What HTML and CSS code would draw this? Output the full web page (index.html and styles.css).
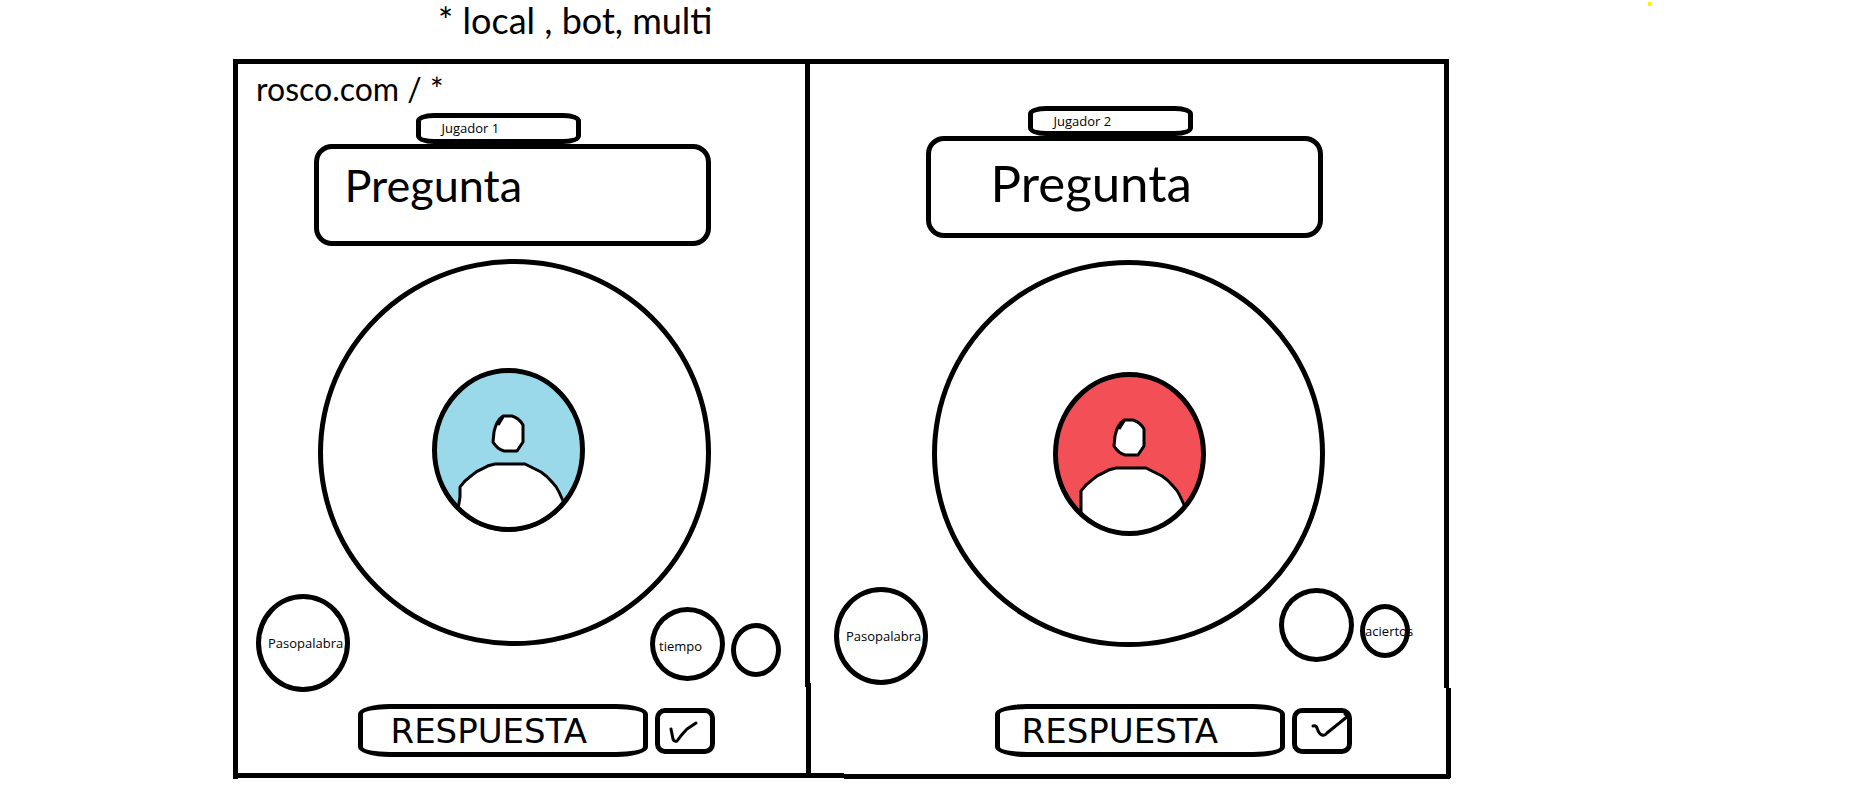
FILE: index.html
```html
<!DOCTYPE html>
<html lang="es">
<head>
<meta charset="utf-8">
<meta name="viewport" content="width=device-width, initial-scale=1">
<title>Rosco</title>
<link rel="stylesheet" href="styles.css">
</head>
<body>
<header class="notes">
  <p class="modes">* local , bot, multi</p>
  <span class="speck"></span>
</header>
<main class="board">
  <svg class="frame" viewBox="0 0 1218 720" preserveAspectRatio="none" aria-hidden="true">
    <path d="M0 2.5H1216M2.5 0V720M574.5 0V628M575.5 624V716M1213.5 0V629M1215.5 629V719M0 716.5H611M611 717.5H1217"/>
  </svg>

  <section class="panel panel-one">
    <p class="address">rosco.com / *</p>
    <div class="tag">Jugador 1</div>
    <h2 class="question">Pregunta</h2>
    <div class="stage">
      <div class="wheel">
        <svg class="avatar" viewBox="0 0 153 164" role="img" aria-label="Jugador 1">
          <ellipse class="avatar-back" cx="76.5" cy="82" rx="74" ry="79.5"/>
          <path class="avatar-body" d="M26 141L28 129L28 119Q33 112 39 108Q44 103 50 101Q56 97 63 96H93Q101 100 109 104Q115 108 120 114Q125 119 127 124L132 135A74 79.5 0 0 1 26 141Z"/>
          <path class="avatar-body" d="M71 48H80Q87 50 91 57V74L85 83H72Q65 81 61 74L62 64Q64 53 71 48ZM71 49L66 57"/>
          <ellipse class="avatar-ring" cx="76.5" cy="82" rx="74" ry="79.5"/>
        </svg>
      </div>
      <button class="disc pass" type="button">Pasopalabra</button>
      <div class="counters">
        <div class="disc time">tiempo</div>
        <div class="disc hits"></div>
      </div>
    </div>
    <form class="reply">
      <input class="answer" type="text" placeholder="RESPUESTA" aria-label="Respuesta del jugador 1">
      <button class="send" type="button" aria-label="Enviar">
        <svg class="tick" viewBox="5 5 50 36" aria-hidden="true"><path d="M16 21L18 31Q19 34 22 33Q27 26 32 21L41 15"/></svg>
      </button>
    </form>
  </section>

  <section class="panel panel-two">
    <div class="tag">Jugador 2</div>
    <h2 class="question">Pregunta</h2>
    <div class="stage">
      <div class="wheel">
        <svg class="avatar" viewBox="0 0 153 164" role="img" aria-label="Jugador 2">
          <ellipse class="avatar-back" cx="76.5" cy="82" rx="74" ry="79.5"/>
          <path class="avatar-body" d="M28 141V119Q33 112 39 108Q44 103 50 101Q56 97 63 96H93Q101 100 109 104Q115 108 120 114Q125 119 127 124L132 135A74 79.5 0 0 1 28 141Z"/>
          <path class="avatar-body" d="M71 48H80Q87 50 91 57V74L85 83H72Q65 81 61 74L62 64Q64 53 71 48ZM71 49L66 57"/>
          <ellipse class="avatar-ring" cx="76.5" cy="82" rx="74" ry="79.5"/>
        </svg>
      </div>
      <button class="disc pass" type="button">Pasopalabra</button>
      <div class="counters">
        <div class="disc time"></div>
        <div class="disc hits">aciertos</div>
      </div>
    </div>
    <form class="reply">
      <input class="answer" type="text" placeholder="RESPUESTA" aria-label="Respuesta del jugador 2">
      <button class="send" type="button" aria-label="Enviar">
        <svg class="tick" viewBox="5 5 50 36" aria-hidden="true"><path d="M21 18Q24 17 25 20Q27 26 30 27Q33 28 35 25L56 8M53 6L56 8"/></svg>
      </button>
    </form>
  </section>
</main>
</body>
</html>
```
FILE: styles.css
```css
* {
  box-sizing: border-box;
}

body {
  margin: 0;
  background: #fff;
  color: #000;
  font-family: "Open Sans", "Noto Sans", sans-serif;
  font-size: 13px;
}

.notes {
  position: relative;
  height: 59px;
  padding-left: 23.5%;
}

.modes,
.address {
  margin: 0;
  font-family: Lato, sans-serif;
  font-size: 32px;
  line-height: 40px;
}

.modes {
  font-size: 36px;
}

.speck {
  position: absolute;
  top: 2px;
  left: 88.4%;
  width: 3px;
  height: 4px;
  background: #fff200;
}

.board {
  position: relative;
  display: grid;
  grid-template-columns: 575fr 643fr;
  width: 65.35%;
  min-width: 1160px;
  margin-left: 12.5%;
}

.frame {
  position: absolute;
  inset: 0;
  width: 100%;
  height: 100%;
  pointer-events: none;
}

.frame path {
  fill: none;
  stroke: #000;
  stroke-width: 5;
  shape-rendering: crispEdges;
}

.panel {
  display: flex;
  flex-direction: column;
  align-items: center;
  padding-bottom: 22px;
}

.panel-one {
  padding-left: 23px;
  padding-right: 27px;
}

.panel-two {
  padding-top: 47px;
  padding-left: 26px;
  padding-right: 41px;
}

.address {
  align-self: flex-start;
  height: 54px;
  padding-top: 10px;
}

.tag {
  width: 165px;
  height: 31px;
  padding-left: 21px;
  border: 5px solid #000;
  border-radius: 18px / 8px;
  line-height: 21px;
}

.question {
  width: 397px;
  height: 102px;
  margin: 0;
  border: 5px solid #000;
  border-radius: 18px;
  font-family: Lato, sans-serif;
  font-weight: 400;
  line-height: 64px;
}

.panel-one .tag {
  margin-right: 41px;
}

.panel-one .question {
  margin-right: 13px;
  padding-left: 26px;
  padding-top: 4px;
  font-size: 45px;
}

.panel-two .tag {
  height: 30px;
  margin-right: 24px;
}

.panel-two .question {
  margin-left: 4px;
  padding-left: 60px;
  padding-top: 10px;
  font-size: 51px;
}

.stage {
  display: grid;
  align-self: stretch;
}

.panel-one .stage {
  height: 433px;
  margin-top: 13px;
}

.panel-two .stage {
  height: 425px;
  margin-top: 22px;
}

.wheel,
.pass,
.counters {
  grid-area: 1 / 1;
}

.wheel {
  display: grid;
  place-items: center;
  justify-self: center;
  width: 393px;
  height: 387px;
  border: 5px solid #000;
  border-radius: 50%;
}

.panel-one .wheel {
  margin-right: 9px;
  padding-right: 12px;
  padding-bottom: 5px;
}

.panel-two .wheel {
  margin-left: 12px;
  padding-left: 2px;
}

.avatar {
  display: block;
  width: 153px;
  height: 164px;
}

.avatar-ring {
  fill: none;
  stroke: #000;
  stroke-width: 5;
}

.avatar-body {
  fill: #fff;
  stroke: #000;
  stroke-width: 3;
  stroke-linejoin: round;
}

.panel-one .avatar-back {
  fill: #99d9ea;
}

.panel-two .avatar-back {
  fill: #f34f57;
}

.disc {
  display: flex;
  align-items: center;
  border: 5px solid #000;
  border-radius: 50%;
  background: transparent;
  color: #000;
  font: inherit;
  white-space: nowrap;
}

.pass {
  align-self: end;
  justify-self: start;
  width: 94px;
  height: 98px;
  padding: 0 0 0 7px;
}

.counters {
  display: flex;
  align-self: end;
  align-items: flex-end;
  justify-self: end;
  gap: 6px;
}

.panel-one .counters {
  margin-bottom: 11px;
}

.panel-two .counters {
  margin-bottom: 23px;
}

.time {
  width: 75px;
  height: 74px;
  padding-top: 4px;
  padding-left: 4px;
}

.hits {
  width: 50px;
  height: 54px;
  margin-bottom: 4px;
}

.reply {
  display: flex;
  align-items: center;
  gap: 7px;
}

.panel-one .reply {
  margin-top: 12px;
  margin-left: 35px;
}

.panel-two .reply {
  margin-top: 19px;
  margin-left: 102px;
}

.answer {
  width: 290px;
  height: 53px;
  padding: 0 0 0 28px;
  border: 5px solid #000;
  border-radius: 32px / 10px;
  background: transparent;
  color: #000;
  font-family: "DejaVu Sans", sans-serif;
  font-size: 34px;
}

.panel-two .answer {
  padding-left: 22px;
}

.answer::placeholder {
  color: #000;
  opacity: 1;
}

.send {
  display: grid;
  place-items: center;
  width: 60px;
  height: 46px;
  padding: 0;
  border: 5px solid #000;
  border-radius: 10px;
  background: transparent;
}

.tick {
  width: 50px;
  height: 36px;
  overflow: visible;
}

.tick path {
  fill: none;
  stroke: #000;
  stroke-width: 3;
  stroke-linecap: round;
  stroke-linejoin: round;
}
```
